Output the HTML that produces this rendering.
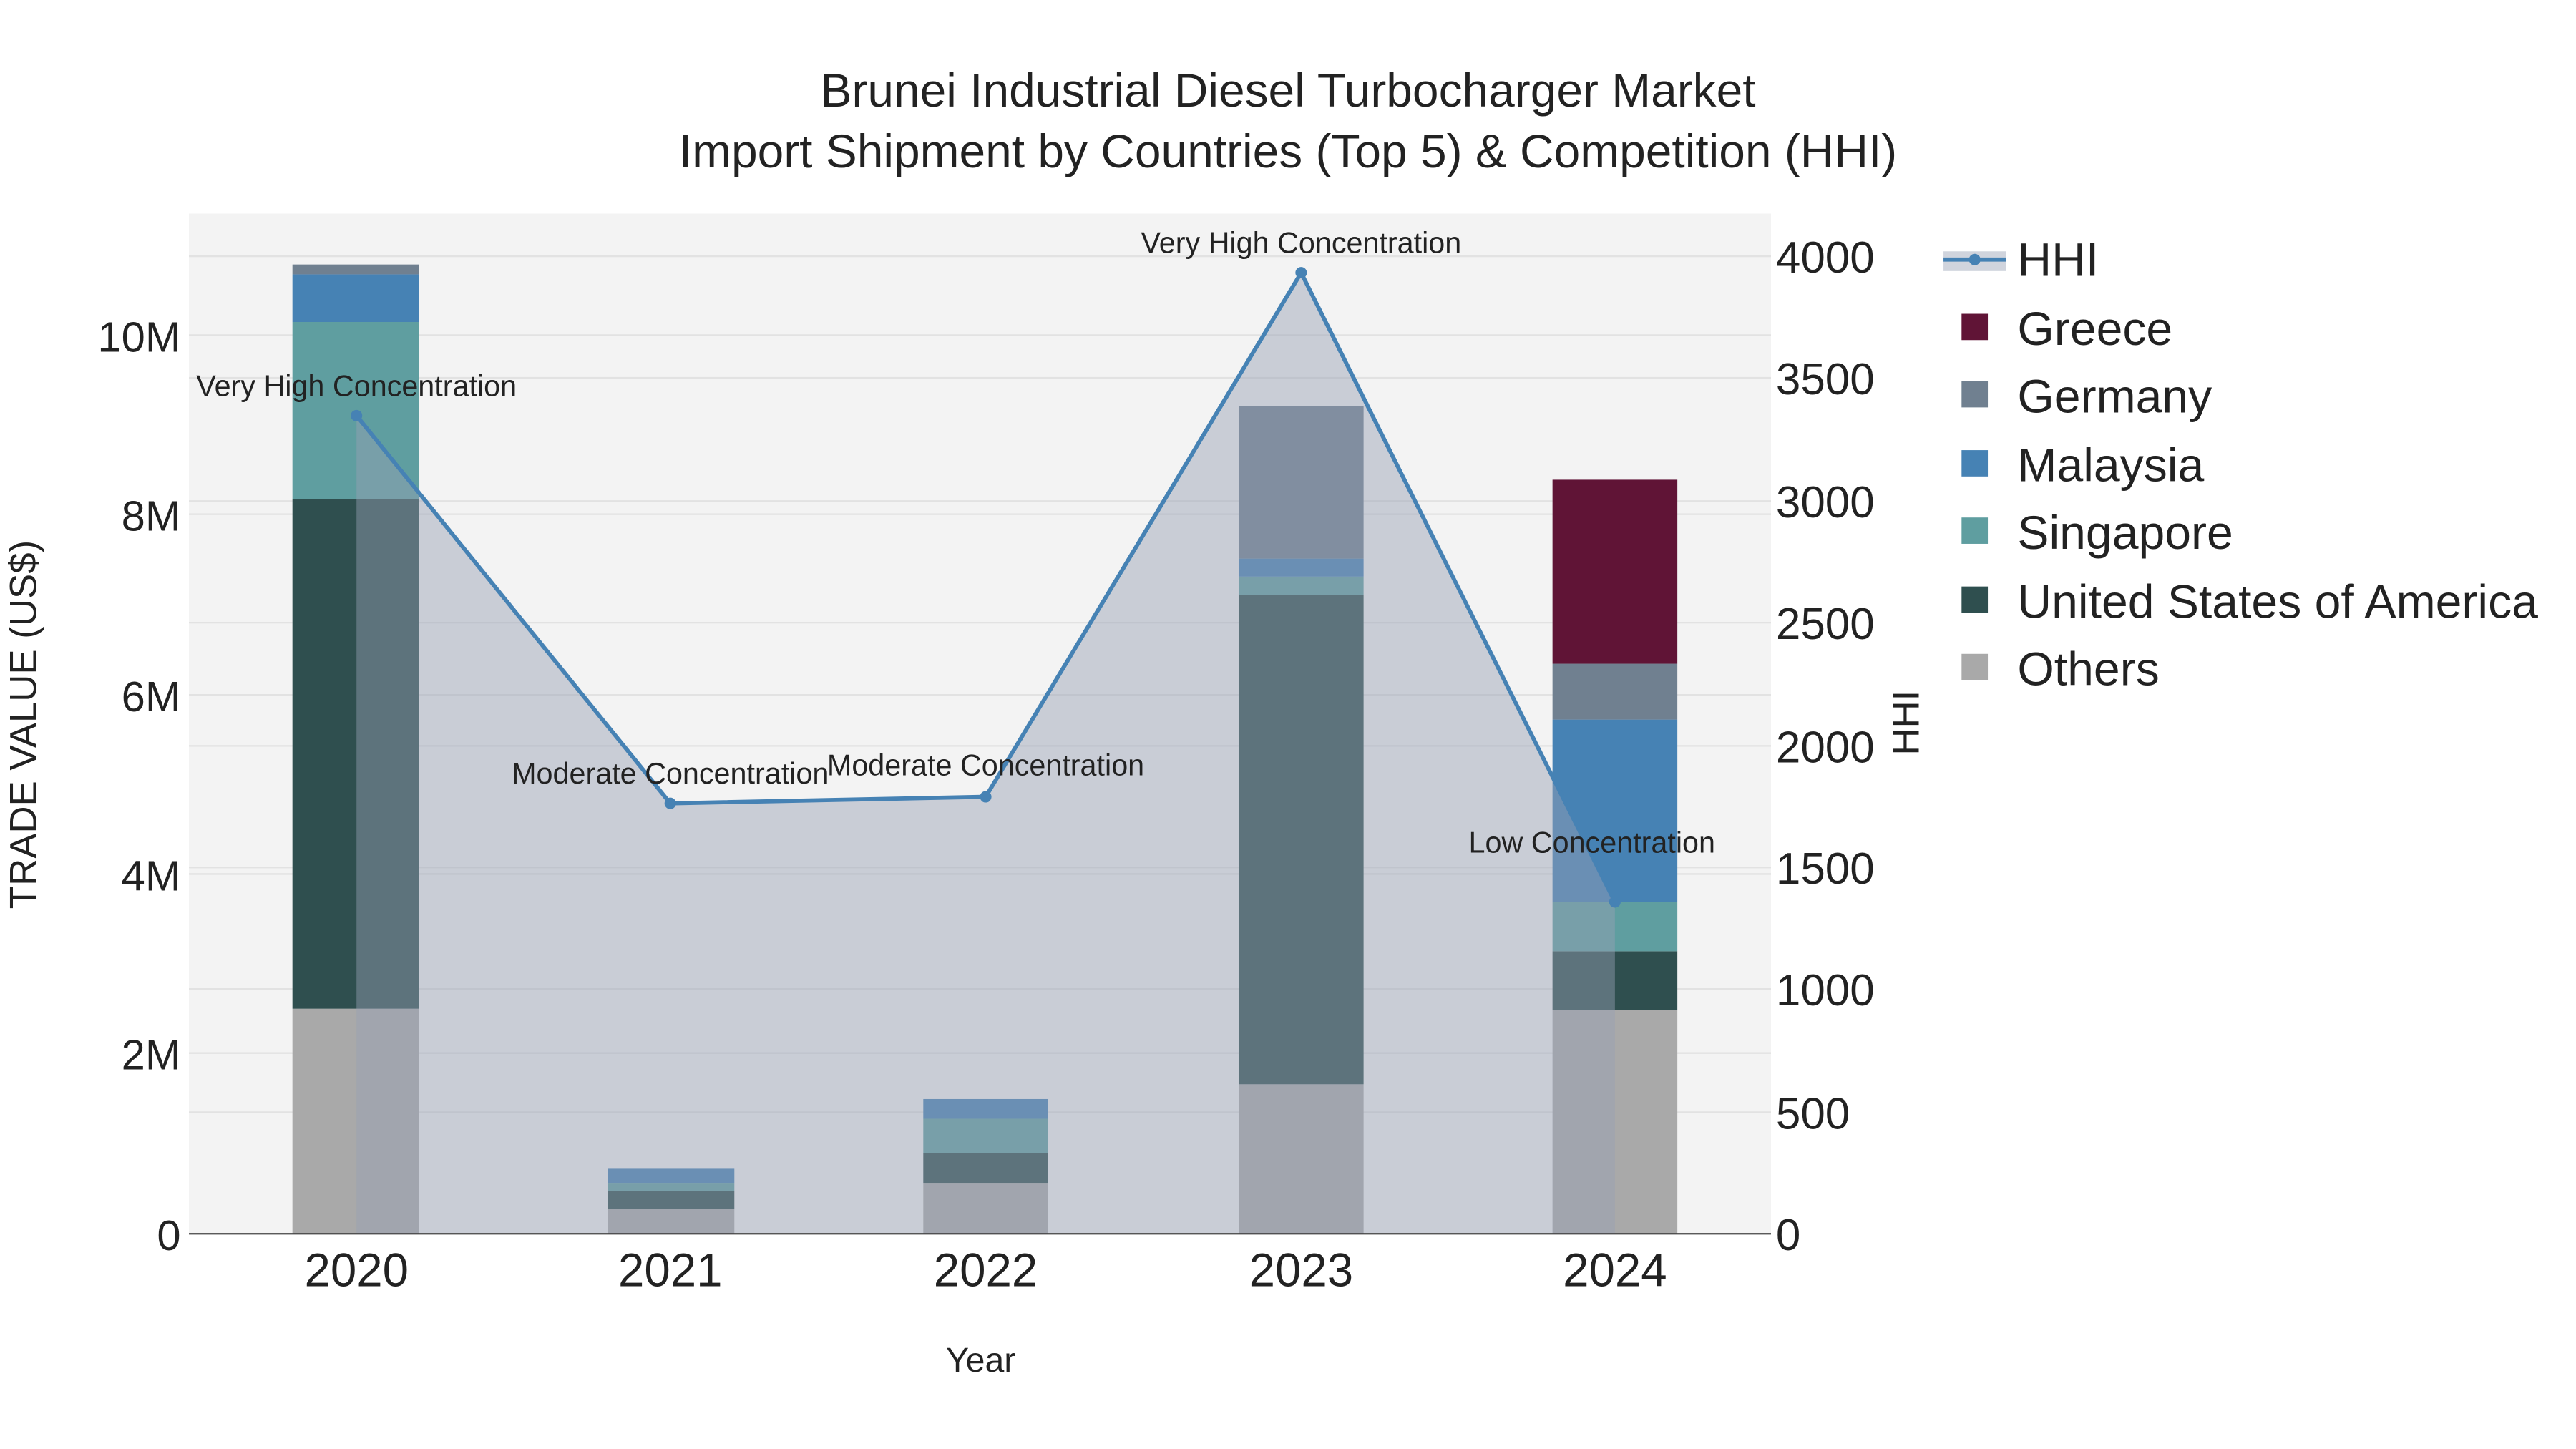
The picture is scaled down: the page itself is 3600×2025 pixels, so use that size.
<!DOCTYPE html>
<html><head><meta charset="utf-8"><style>
html,body{margin:0;padding:0;background:#fff;}
svg{display:block;}
text{font-family:"Liberation Sans",sans-serif;fill:#222;}
</style></head><body>
<svg width="3600" height="2025" viewBox="0 0 1568 882" xmlns="http://www.w3.org/2000/svg">
<rect x="0" y="0" width="1568" height="882" fill="#fff"/>
<rect x="115" y="130" width="963" height="621" fill="#f3f3f3"/>
<g stroke="#e2e2e2" stroke-width="1">
<line x1="115" x2="1078" y1="641" y2="641"/><line x1="115" x2="1078" y1="532" y2="532"/>
<line x1="115" x2="1078" y1="423" y2="423"/><line x1="115" x2="1078" y1="313" y2="313"/>
<line x1="115" x2="1078" y1="204" y2="204"/>
<line x1="115" x2="1078" y1="677" y2="677"/><line x1="115" x2="1078" y1="602" y2="602"/>
<line x1="115" x2="1078" y1="528" y2="528"/><line x1="115" x2="1078" y1="454" y2="454"/>
<line x1="115" x2="1078" y1="379" y2="379"/><line x1="115" x2="1078" y1="305" y2="305"/>
<line x1="115" x2="1078" y1="230" y2="230"/><line x1="115" x2="1078" y1="156" y2="156"/>
</g>
<g>
<rect x="178" y="614" width="77" height="137" fill="#a9a9a9"/>
<rect x="178" y="304" width="77" height="310" fill="#2f4f4f"/>
<rect x="178" y="196" width="77" height="108" fill="#5f9ea0"/>
<rect x="178" y="167" width="77" height="29" fill="#4682b4"/>
<rect x="178" y="161" width="77" height="6" fill="#708090"/>

<rect x="370" y="736" width="77" height="15" fill="#a9a9a9"/>
<rect x="370" y="725" width="77" height="11" fill="#2f4f4f"/>
<rect x="370" y="720" width="77" height="5" fill="#5f9ea0"/>
<rect x="370" y="711" width="77" height="9" fill="#4682b4"/>

<rect x="562" y="720" width="76" height="31" fill="#a9a9a9"/>
<rect x="562" y="702" width="76" height="18" fill="#2f4f4f"/>
<rect x="562" y="681" width="76" height="21" fill="#5f9ea0"/>
<rect x="562" y="669" width="76" height="12" fill="#4682b4"/>

<rect x="754" y="660" width="76" height="91" fill="#a9a9a9"/>
<rect x="754" y="362" width="76" height="298" fill="#2f4f4f"/>
<rect x="754" y="351" width="76" height="11" fill="#5f9ea0"/>
<rect x="754" y="340" width="76" height="11" fill="#4682b4"/>
<rect x="754" y="247" width="76" height="93" fill="#708090"/>

<rect x="945" y="615" width="76" height="136" fill="#a9a9a9"/>
<rect x="945" y="579" width="76" height="36" fill="#2f4f4f"/>
<rect x="945" y="549" width="76" height="30" fill="#5f9ea0"/>
<rect x="945" y="438" width="76" height="111" fill="#4682b4"/>
<rect x="945" y="404" width="76" height="34" fill="#708090"/>
<rect x="945" y="292" width="76" height="112" fill="#601436"/>
</g>
<polygon points="217,253 408,489 600,485 792,166 983,549 983,751 217,751" fill="rgba(150,160,180,0.45)"/>
<polyline points="217,253 408,489 600,485 792,166 983,549" fill="none" stroke="#4682b4" stroke-width="2.5"/>
<g fill="#4682b4"><circle cx="217" cy="253" r="3.5"/><circle cx="408" cy="489" r="3.5"/><circle cx="600" cy="485" r="3.5"/><circle cx="792" cy="166" r="3.5"/><circle cx="983" cy="549" r="3.5"/></g>
<line x1="115" x2="1078" y1="751" y2="751" stroke="#444" stroke-width="1"/>
<g font-size="18" text-anchor="middle">
<text x="217" y="241">Very High Concentration</text>
<text x="408" y="477">Moderate Concentration</text>
<text x="600" y="472">Moderate Concentration</text>
<text x="792" y="154">Very High Concentration</text>
<text x="969" y="519">Low Concentration</text>
</g>
<g font-size="26" text-anchor="end">
<text x="110" y="761">0</text><text x="110" y="651">2M</text><text x="110" y="542">4M</text>
<text x="110" y="433">6M</text><text x="110" y="323">8M</text><text x="110" y="214">10M</text>
</g>
<g font-size="27" text-anchor="start">
<text x="1081" y="761">0</text><text x="1081" y="687">500</text><text x="1081" y="612">1000</text>
<text x="1081" y="538">1500</text><text x="1081" y="464">2000</text><text x="1081" y="389">2500</text>
<text x="1081" y="315">3000</text><text x="1081" y="240">3500</text><text x="1081" y="166">4000</text>
</g>
<g font-size="28.5" text-anchor="middle">
<text x="217" y="783">2020</text><text x="408" y="783">2021</text><text x="600" y="783">2022</text>
<text x="792" y="783">2023</text><text x="983" y="783">2024</text>
</g>
<text x="597" y="835" font-size="21" text-anchor="middle">Year</text>
<text transform="translate(22,441) rotate(-90)" font-size="23" text-anchor="middle">TRADE VALUE (US$)</text>
<text transform="translate(1168,440) rotate(-90)" font-size="23" text-anchor="middle">HHI</text>
<text x="784" y="65" font-size="28.7" text-anchor="middle">Brunei Industrial Diesel Turbocharger Market</text>
<text x="784" y="102" font-size="28.7" text-anchor="middle">Import Shipment by Countries (Top 5) &amp; Competition (HHI)</text>
<rect x="1183" y="153" width="38" height="12" fill="rgba(150,160,180,0.45)"/>
<line x1="1183" x2="1221" y1="158" y2="158" stroke="#4682b4" stroke-width="2.5"/>
<circle cx="1202" cy="158" r="3.5" fill="#4682b4"/>
<rect x="1194" y="191" width="16" height="16" fill="#601436"/>
<rect x="1194" y="232" width="16" height="16" fill="#708090"/>
<rect x="1194" y="274" width="16" height="16" fill="#4682b4"/>
<rect x="1194" y="315" width="16" height="16" fill="#5f9ea0"/>
<rect x="1194" y="357" width="16" height="16" fill="#2f4f4f"/>
<rect x="1194" y="398" width="16" height="16" fill="#a9a9a9"/>
<g font-size="28.8">
<text x="1228" y="168">HHI</text><text x="1228" y="210">Greece</text><text x="1228" y="251">Germany</text>
<text x="1228" y="293">Malaysia</text><text x="1228" y="334">Singapore</text>
<text x="1228" y="376">United States of America</text><text x="1228" y="417">Others</text>
</g>
</svg>
</body></html>
